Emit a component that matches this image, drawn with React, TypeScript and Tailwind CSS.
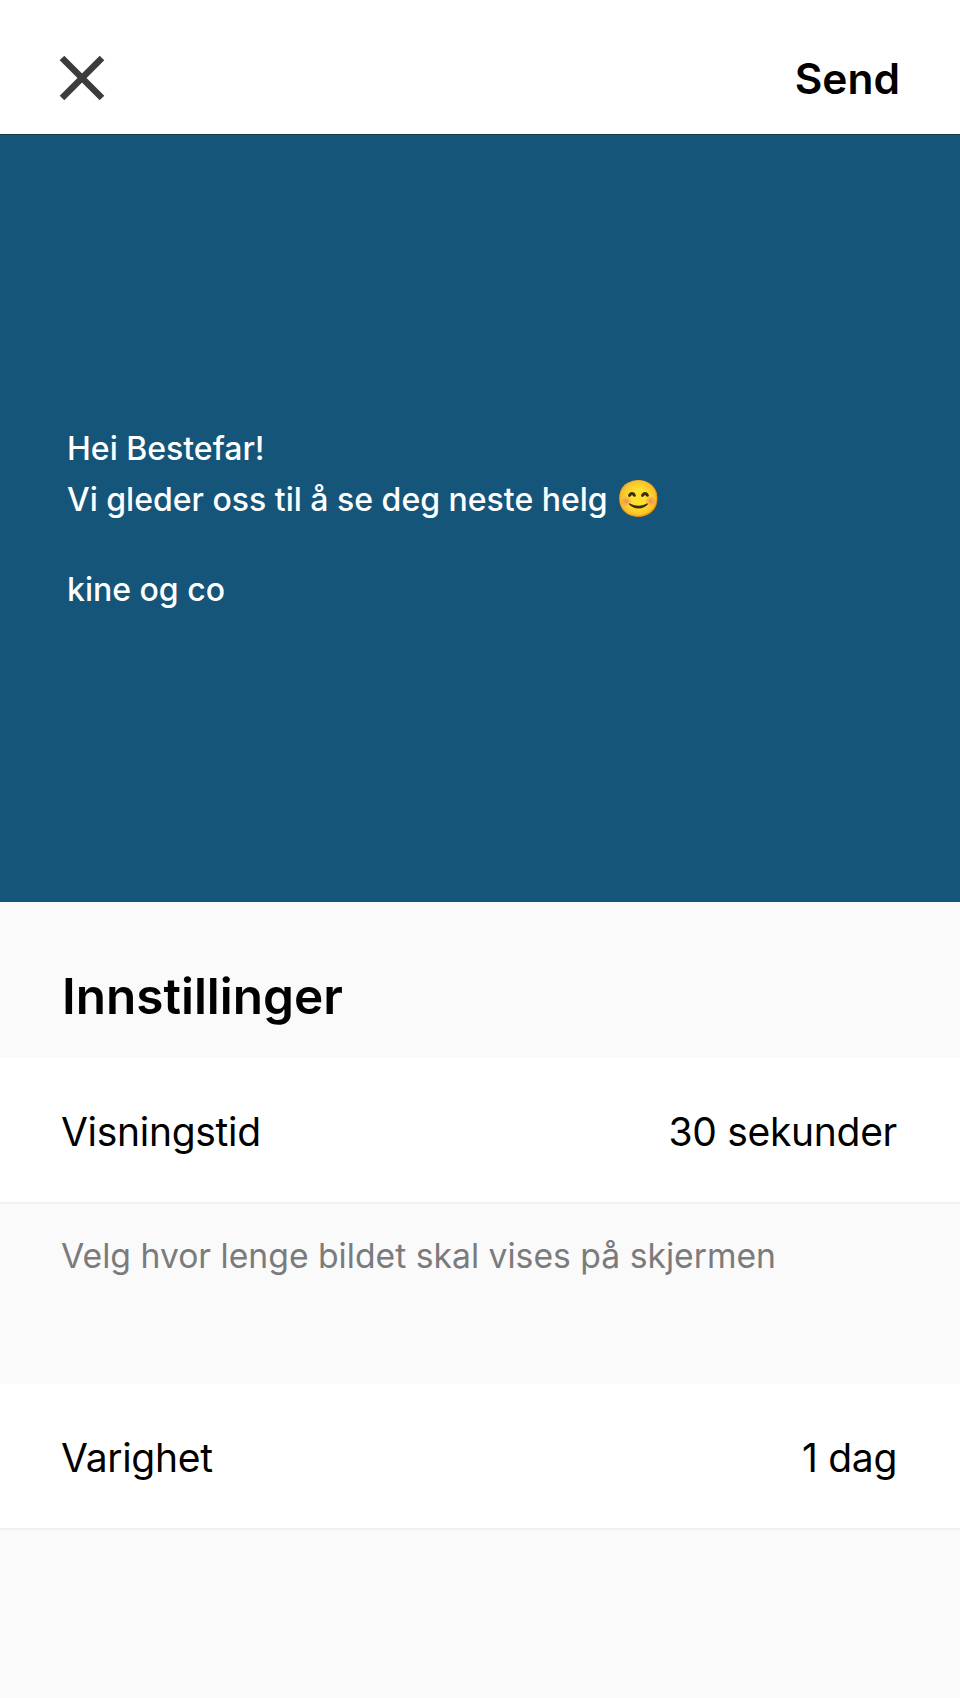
const Row = ({ label, value }: { label: string; value: string }) => (
  <div className="flex h-[146px] items-center justify-between border-b-2 border-[#f4eef0] bg-white pl-[61px] pr-[63px] pt-[5px] text-[39px] tracking-[-0.3px] text-black">
    <span>{label}</span>
    <span>{value}</span>
  </div>
);

const App = () => {
  return (
    <div className="flex h-[1698px] w-[960px] flex-col overflow-hidden bg-[#fafafa] font-['Inter','Lato',sans-serif]">
      {/* Topp */}
      <header className="flex h-[135px] items-center justify-between border-b border-[#1c3a4d] bg-white pl-[59px] pr-[60px] pt-[22px]">
        <svg width="46" height="46" viewBox="0 0 46 46" fill="none" stroke="#3c3c3c" strokeWidth="6.5">
          <path d="M3 3l40 40M43 3L3 43" />
        </svg>
        <span className="pt-[2px] text-[42.5px] font-semibold text-black">Send</span>
      </header>

      {/* Melding */}
      <section className="flex h-[767px] flex-col justify-center bg-[#15557a] pl-[67px] text-[32px] leading-[51px] font-medium text-white">
        <p>Hei Bestefar!</p>
        <p>
          Vi gleder oss til å se deg neste helg <span className="text-[36px] leading-none">😊</span>
        </p>
        <p className="mt-[39px]">kine og co</p>
      </section>

      <h2 className="flex h-[156px] items-center pl-[62px] pt-[33px] text-[49.5px] font-semibold text-black">Innstillinger</h2>

      <Row label="Visningstid" value="30 sekunder" />
      <p className="h-[180px] pt-[27px] pl-[61px] text-[33.7px] text-[#7b7b7d]">
        Velg hvor lenge bildet skal vises på skjermen
      </p>
      <Row label="Varighet" value="1 dag" />
    </div>
  );
};

export default App;
